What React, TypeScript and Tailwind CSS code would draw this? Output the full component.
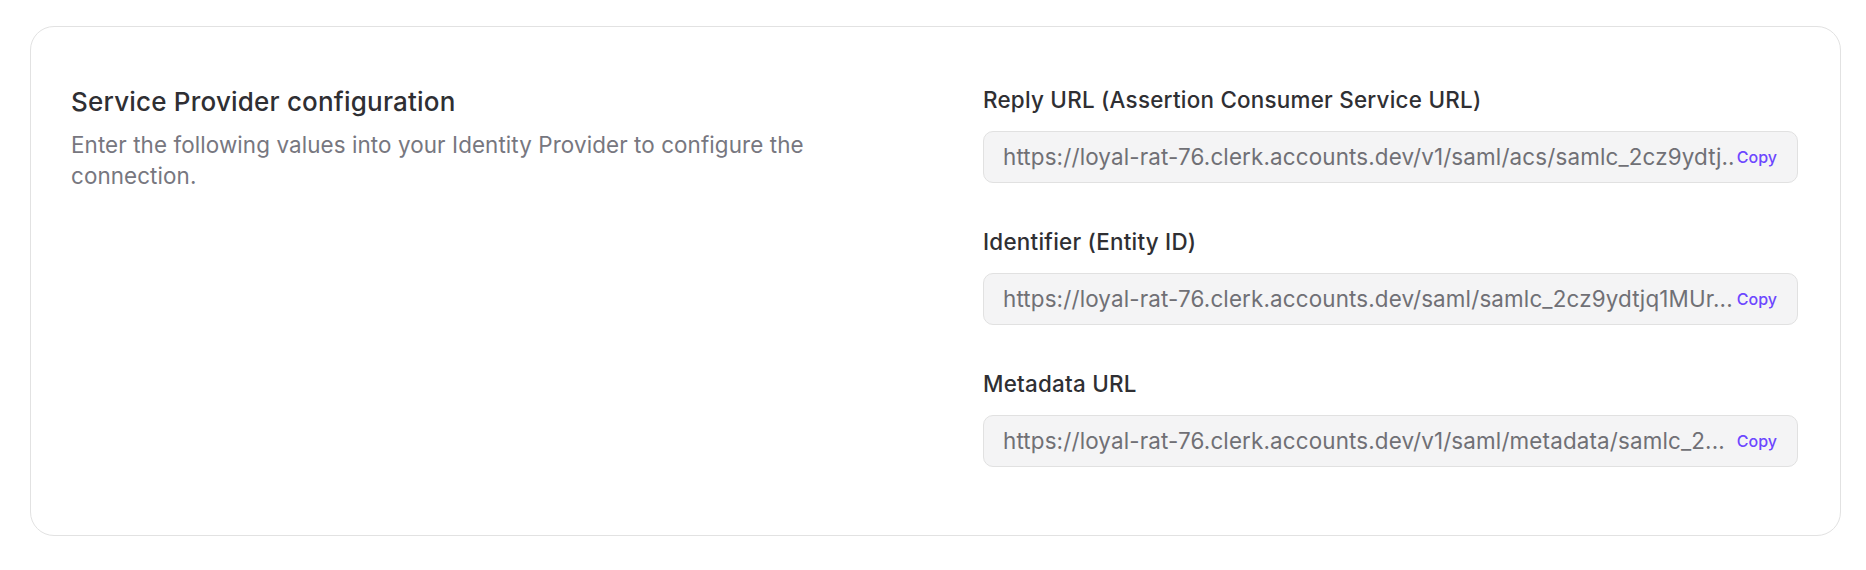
import React from "react";

const fields = [
  {
    label: "Reply URL (Assertion Consumer Service URL)",
    value: "https://loyal-rat-76.clerk.accounts.dev/v1/saml/acs/samlc_2cz9ydtj..",
  },
  {
    label: "Identifier (Entity ID)",
    value: "https://loyal-rat-76.clerk.accounts.dev/saml/samlc_2cz9ydtjq1MUr...",
  },
  {
    label: "Metadata URL",
    value: "https://loyal-rat-76.clerk.accounts.dev/v1/saml/metadata/samlc_2...",
  },
];

export default function App() {
  return (
    <div
      className="w-[1866px] h-[570px] bg-white pt-[26px] pl-[30px]"
      style={{ fontFamily: "Inter, 'Noto Sans', sans-serif" }}
    >
      <div className="w-[1811px] h-[510px] rounded-3xl border border-[#e2e2e2] flex pl-[40px] pr-[42px] pt-[58px]">
        <div className="w-[815px] pt-[1px]">
          <h2 className="text-[26px] leading-[32px] font-medium text-[#2f2f33] tracking-[0.2px]">
            Service Provider configuration
          </h2>
          <p className="mt-[11px] w-[780px] text-[22.4px] leading-[31px] text-[#77777f] tracking-[0.1px]">
            Enter the following values into your Identity Provider to configure the connection.
          </p>
        </div>
        <div className="ml-auto w-[815px] flex flex-col gap-[44px]">
          {fields.map((f) => (
            <div key={f.label} className="flex flex-col">
              <div className="mt-[1px] text-[22.4px] leading-[28px] font-medium text-[#2f2f33] tracking-[0.25px]">
                {f.label}
              </div>
              <div className="mt-[17px] h-[52px] rounded-[10px] border border-[#e1e1e1] bg-[#f4f4f5] flex items-center pl-[19px] pr-[20px]">
                <span className="flex-1 min-w-0 whitespace-nowrap overflow-hidden text-[22.4px] text-[#707075] tracking-[0.15px]">
                  {f.value}
                </span>
                <span className="shrink-0 ml-[3px] text-[16px] font-medium text-[#6c47ff]">Copy</span>
              </div>
            </div>
          ))}
        </div>
      </div>
    </div>
  );
}
